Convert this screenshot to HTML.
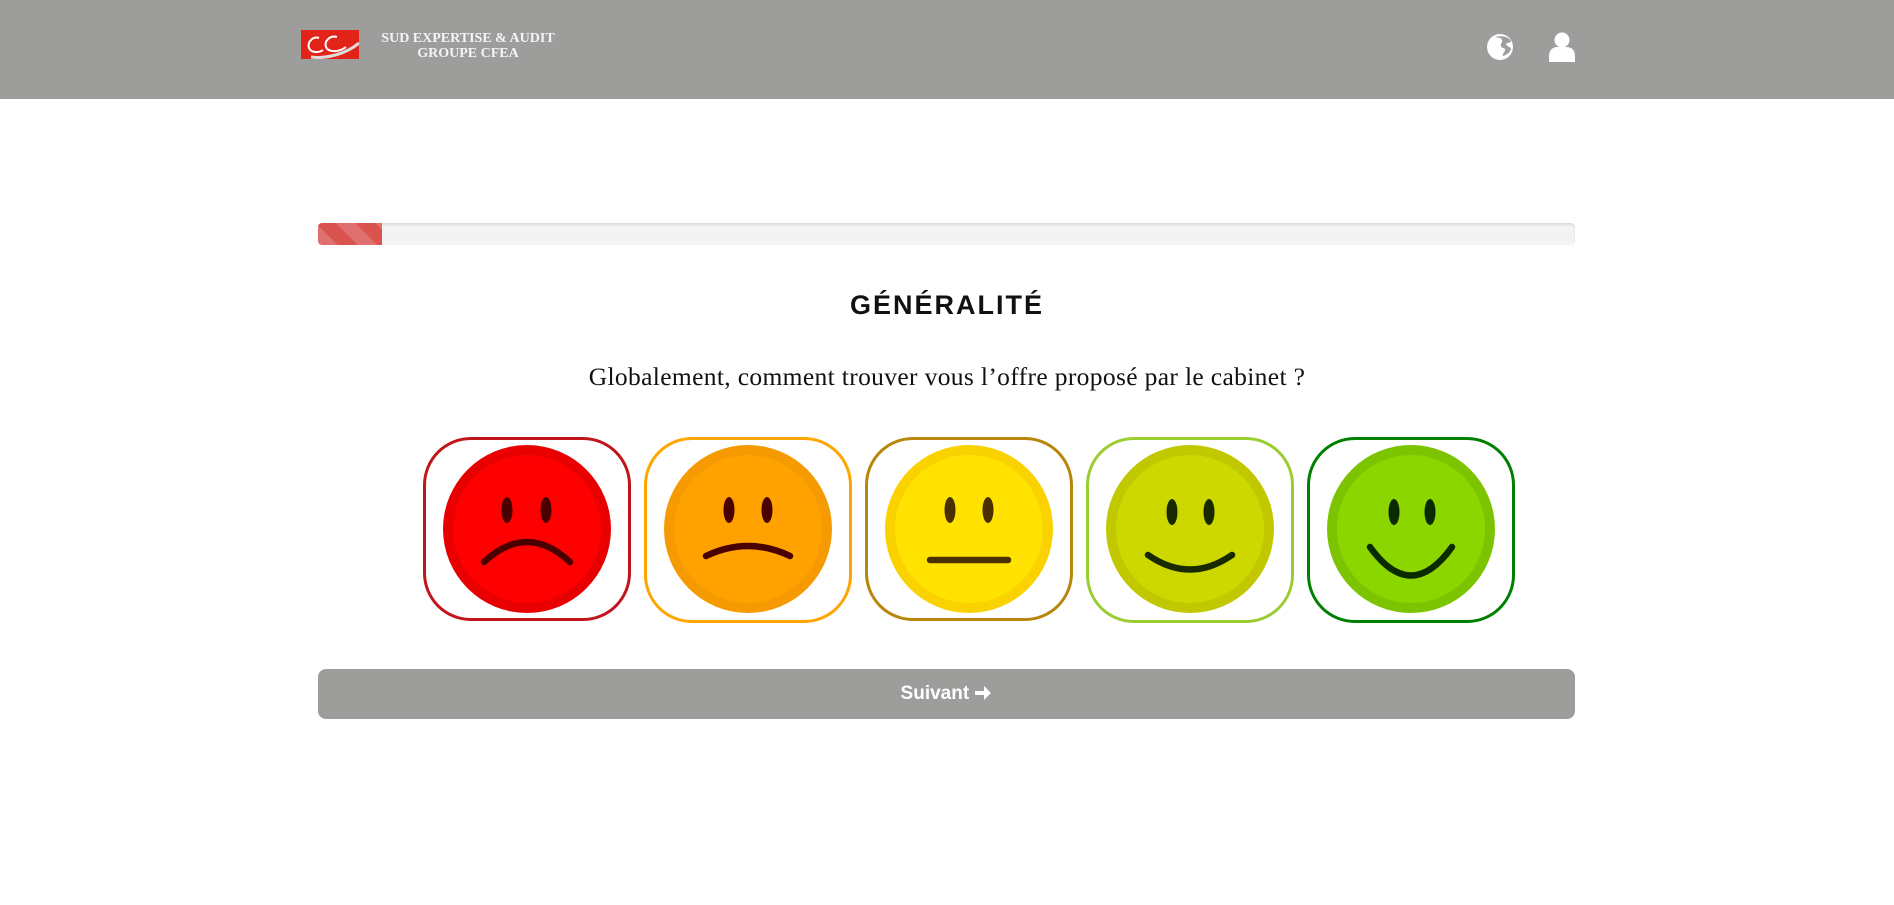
<!DOCTYPE html>
<html><head><meta charset="utf-8"><style>
*{margin:0;padding:0;box-sizing:border-box}
body{width:1894px;height:905px;background:#fff;position:relative;overflow:hidden;font-family:"Liberation Sans",sans-serif}
.hdr{position:absolute;left:0;top:0;width:1894px;height:99px;background:#9d9d9c}
.logo{position:absolute;left:301px;top:30px;width:58px;height:29px;background:#e2231a}
.lt{position:absolute;left:379px;top:31px;width:178px;text-align:center;color:#f4f4f4;font-family:"Liberation Serif",serif;font-weight:bold;font-size:14px;line-height:15px}
.prog{position:absolute;left:318px;top:223px;width:1257px;height:22px;background:#f3f3f3;border-radius:4px;box-shadow:inset 0 2px 2px rgba(0,0,0,.1);overflow:hidden}
.fill{width:64px;height:100%;background:repeating-linear-gradient(45deg,#e07070 0 14px,#d9534f 14px 28px)}
h1{position:absolute;left:0;width:1894px;top:290px;text-align:center;font-size:27px;font-weight:bold;letter-spacing:2px;color:#111}
.q{position:absolute;left:0;width:1894px;top:362px;text-align:center;font-family:"Liberation Serif",serif;font-size:25.5px;letter-spacing:0.35px;color:#111}
.box{position:absolute;top:437px;width:208px;height:184px;border:3px solid;border-radius:48px;background:#fff}
.box svg{position:absolute;left:16px;top:4px}
.btn{position:absolute;left:318px;top:669px;width:1257px;height:50px;background:#9d9d9c;border-radius:8px;color:#fff;font-weight:bold;font-size:19px;text-align:center;line-height:50px}
</style></head><body>
<div class="hdr">
<div class="logo"><svg width="58" height="29" viewBox="0 0 58 29"><path d="M18 8c-6-2-12 4-10 10 2 5 10 5 14 2M36 7c-7-2-13 4-11 10 2 5 12 6 20 0" stroke="#fff" stroke-width="2" fill="none"/><path d="M10 27c15 2 35-3 48-14" stroke="#ddd" stroke-width="3" fill="none"/></svg></div>
<div class="lt">SUD EXPERTISE &amp; AUDIT<br>GROUPE CFEA</div>
<svg style="position:absolute;left:1486px;top:33px" width="28" height="28" viewBox="0 0 28 28"><circle cx="14" cy="14" r="13" fill="#fff"/><path d="M9 4c3 1 6 0 7 3s-2 3-1 6 4 1 4 4-3 3-2 6c3-1 7-3 8-7-1-3-4-2-5-5 2-2 5-1 5-3-3-4-8-6-16-4z" fill="#9d9d9c"/></svg>
<svg style="position:absolute;left:1548px;top:32px" width="28" height="30" viewBox="0 0 28 30"><circle cx="14" cy="8" r="7.5" fill="#fff"/><path d="M1 30v-6c0-6 4-9 8-9h10c4 0 8 3 8 9v6z" fill="#fff"/></svg>
</div>
<div class="prog"><div class="fill"></div></div>
<h1>GÉNÉRALITÉ</h1>
<div class="q">Globalement, comment trouver vous l’offre proposé par le cabinet ?</div>

<div class="box" style="left:423px;border-color:#c0161b"><svg width="170" height="170" viewBox="0 0 170 170"><circle cx="85" cy="85" r="84" fill="#e80000"/><circle cx="85" cy="85" r="74" fill="#ff0000"/><ellipse cx="65" cy="66" rx="5.5" ry="13" fill="#4a0000"/><ellipse cx="104" cy="66" rx="5.5" ry="13" fill="#4a0000"/><path d="M42 118Q85 78 128 118" stroke="#4a0000" stroke-width="6.5" stroke-linecap="round" fill="none"/></svg></div>
<div class="box" style="left:644px;border-color:#ffa500;height:186px"><svg width="170" height="170" viewBox="0 0 170 170"><circle cx="85" cy="85" r="84" fill="#f59a00"/><circle cx="85" cy="85" r="74" fill="#ffa200"/><ellipse cx="66" cy="66" rx="5.5" ry="13" fill="#4a0000"/><ellipse cx="104" cy="66" rx="5.5" ry="13" fill="#4a0000"/><path d="M43 112Q85 92 127 112" stroke="#4a0000" stroke-width="6.5" stroke-linecap="round" fill="none"/></svg></div>
<div class="box" style="left:865px;border-color:#b8860b"><svg width="170" height="170" viewBox="0 0 170 170"><circle cx="85" cy="85" r="84" fill="#fad200"/><circle cx="85" cy="85" r="74" fill="#ffe200"/><ellipse cx="66" cy="66" rx="5.5" ry="13" fill="#4a3000"/><ellipse cx="104" cy="66" rx="5.5" ry="13" fill="#4a3000"/><path d="M46 116H124" stroke="#4a3000" stroke-width="6.5" stroke-linecap="round" fill="none"/></svg></div>
<div class="box" style="left:1086px;border-color:#9acd32;height:186px"><svg width="170" height="170" viewBox="0 0 170 170"><circle cx="85" cy="85" r="84" fill="#c2c800"/><circle cx="85" cy="85" r="74" fill="#ccd800"/><ellipse cx="67" cy="68" rx="5.5" ry="13" fill="#1a2a00"/><ellipse cx="104" cy="68" rx="5.5" ry="13" fill="#1a2a00"/><path d="M43 111Q85 140 127 111" stroke="#1a2a00" stroke-width="6.5" stroke-linecap="round" fill="none"/></svg></div>
<div class="box" style="left:1307px;border-color:#008000;height:186px"><svg width="170" height="170" viewBox="0 0 170 170"><circle cx="85" cy="85" r="84" fill="#7cc400"/><circle cx="85" cy="85" r="74" fill="#8cd600"/><ellipse cx="68" cy="68" rx="5.5" ry="13" fill="#0a2a00"/><ellipse cx="104" cy="68" rx="5.5" ry="13" fill="#0a2a00"/><path d="M44 103Q85 160 126 103" stroke="#0a2a00" stroke-width="6.5" stroke-linecap="round" fill="none"/></svg></div>

<div class="btn">Suivant <svg width="18" height="16" viewBox="0 0 18 16" style="vertical-align:-2px"><path d="M1 6h9V1l7 7-7 7v-5H1z" fill="#fff"/></svg></div>
</body></html>
